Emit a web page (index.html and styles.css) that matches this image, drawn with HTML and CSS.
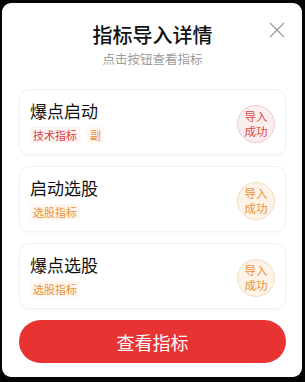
FILE: index.html
```html
<!DOCTYPE html>
<html lang="zh-CN">
<head>
<meta charset="utf-8">
<link rel="stylesheet" href="styles.css">
</head>
<body>
<div class="modal">
  <div class="header">
    <div class="title">指标导入详情</div>
    <div class="subtitle">点击按钮查看指标</div>
    <svg class="close" width="16" height="16" viewBox="0 0 16 16"><path d="M1 1L15 15M15 1L1 15" stroke="#9a9a9a" stroke-width="1.3" fill="none"/></svg>
  </div>
  <div class="list">
    <div class="card">
      <div class="info">
        <div class="name">爆点启动</div>
        <div class="tags"><span class="tag tag-red">技术指标</span><span class="tag tag-orange">副</span></div>
      </div>
      <div class="badge badge-red">导入<br>成功</div>
    </div>
    <div class="card">
      <div class="info">
        <div class="name">启动选股</div>
        <div class="tags"><span class="tag tag-orange">选股指标</span></div>
      </div>
      <div class="badge badge-orange">导入<br>成功</div>
    </div>
    <div class="card">
      <div class="info">
        <div class="name">爆点选股</div>
        <div class="tags"><span class="tag tag-orange">选股指标</span></div>
      </div>
      <div class="badge badge-orange">导入<br>成功</div>
    </div>
  </div>
  <div class="btn">查看指标</div>
</div>
</body>
</html>
```
FILE: styles.css
```css
html, body {
  margin: 0;
  padding: 0;
  background: #050505;
}
body {
  width: 305px;
  height: 382px;
  padding: 3px 0 0 2px;
  box-sizing: border-box;
  font-family: "Noto Sans CJK SC", "Noto Sans", sans-serif;
}
.modal {
  width: 300px;
  height: 374px;
  background: #fff;
  border-radius: 9px;
  box-sizing: border-box;
  padding: 0 16px 0 17px;
  display: flex;
  flex-direction: column;
}
.header {
  position: relative;
  display: flex;
  flex-direction: column;
  align-items: center;
  padding-top: 18px;
  height: 68px;
  box-sizing: border-box;
}
.title {
  font-size: 20px;
  line-height: 28px;
  font-weight: 500;
  color: #111;
}
.subtitle {
  font-size: 12.5px;
  line-height: 18px;
  color: #9b9b9b;
  margin-top: 1px;
}
.close {
  position: absolute;
  right: 1px;
  top: 19px;
}
.list {
  display: flex;
  flex-direction: column;
  gap: 11px;
  margin-top: 18px;
}
.card {
  height: 66px;
  box-sizing: border-box;
  border: 1px solid #f1f1f1;
  border-radius: 10px;
  box-shadow: 0 1px 3px rgba(0,0,0,0.03);
  display: flex;
  align-items: center;
  justify-content: space-between;
  padding: 0 10px 0 10px;
}
.info {
  display: flex;
  flex-direction: column;
  margin-top: -2px;
}
.name {
  font-size: 17px;
  line-height: 24px;
  color: #111;
}
.tags {
  display: flex;
  gap: 7px;
  margin-top: 4px;
}
.tag {
  font-size: 11px;
  line-height: 16px;
  padding: 0 3px;
  border-radius: 2px;
}
.tag-red {
  color: #de3b3b;
  background: #fdf4f4;
}
.tag-orange {
  color: #eb9035;
  background: #fef8f0;
}
.badge {
  width: 38px;
  height: 38px;
  border-radius: 50%;
  box-sizing: border-box;
  display: flex;
  align-items: center;
  justify-content: center;
  text-align: center;
  font-size: 11.5px;
  line-height: 15px;
  margin-top: 4px;
}
.badge-red {
  color: #d84b4b;
  background: #fbeeee;
  border: 1px solid #f1caca;
}
.badge-orange {
  color: #e8923a;
  background: #fdf3e6;
  border: 1px solid #f3dcc0;
}
.btn {
  margin-top: 11px;
  height: 43px;
  border-radius: 22px;
  background: #e83333;
  color: #fff;
  font-size: 18px;
  display: flex;
  align-items: center;
  justify-content: center;
}
```
